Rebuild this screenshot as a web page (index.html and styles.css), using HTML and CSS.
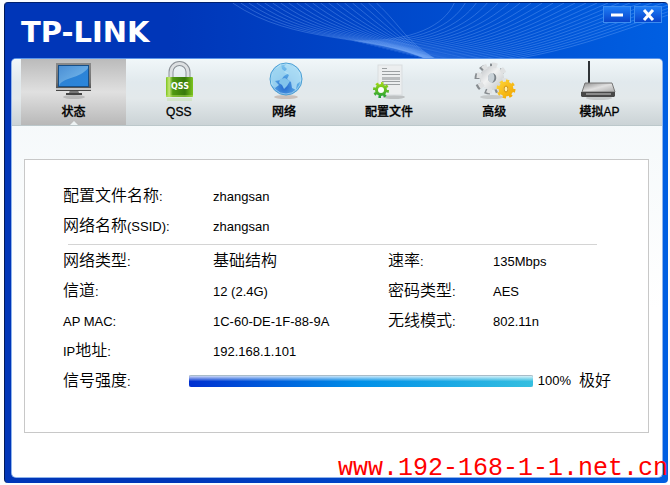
FILE: index.html
```
<!DOCTYPE html>
<html lang="zh-Hans">
<head>
  <meta charset="UTF-8">
  <title>TP-LINK</title>
  <link rel="stylesheet" href="styles.css">
</head>
<body>
<div class="window">
  <header class="titlebar">
    <svg class="waves" id="waves" viewBox="0 0 664 57" preserveAspectRatio="xMaxYMin slice" aria-hidden="true"></svg>
    <div class="logo">TP-LINK</div>
    <div class="window-buttons">
      <button type="button" aria-label="最小化"><svg width="26" height="16"><path d="M7 8h12" stroke="#fff" stroke-width="3"/></svg></button>
      <button type="button" aria-label="关闭"><svg width="26" height="16"><path d="M9 3l9 10M18 3l-9 10" stroke="#fff" stroke-width="3"/></svg></button>
    </div>
  </header>

  <main class="content">
    <nav class="tabs">
      <!-- 状态 -->
      <button type="button" class="tab active">
        <svg width="60" height="42" viewBox="0 0 60 42">
          <defs>
            <linearGradient id="screen" x1="0" y1="0" x2="1" y2="1"><stop offset="0" stop-color="#2f80d0"/><stop offset="1" stop-color="#2a86dc"/></linearGradient>
            <linearGradient id="shine" x1="0" y1="0" x2="1" y2="1"><stop offset="0" stop-color="#4b8fd4"/><stop offset="1" stop-color="#7cc0f0"/></linearGradient>
            <linearGradient id="metal" x1="0" y1="0" x2="0" y2="1"><stop offset="0" stop-color="#8a8a8a"/><stop offset=".7" stop-color="#707070"/><stop offset="1" stop-color="#444"/></linearGradient>
          </defs>
          <ellipse cx="30" cy="37" rx="11" ry="2" fill="#888" opacity=".4"/>
          <path d="M26 30h8l1 3h-10z" fill="#777"/>
          <rect x="22" y="33" width="16" height="2" fill="#444"/>
          <rect x="12" y="3" width="35" height="28" fill="url(#metal)"/>
          <rect x="12" y="28" width="35" height="2" fill="#c4c4c4"/>
          <rect x="14" y="5" width="31" height="22" fill="#174f87"/>
          <rect x="15" y="6" width="29" height="20" fill="url(#shine)"/>
          <path d="M15 26C18 17 36 19 44 8V26z" fill="url(#screen)"/>
        </svg>
        <span>状态</span>
      </button>
      <!-- QSS -->
      <button type="button" class="tab">
        <svg width="60" height="42" viewBox="0 0 60 42">
          <defs>
            <linearGradient id="green" x1="0" y1="0" x2="1" y2="0"><stop offset="0" stop-color="#7cc41f"/><stop offset=".12" stop-color="#c6e878"/><stop offset=".25" stop-color="#4f9a10"/><stop offset=".7" stop-color="#37790a"/><stop offset="1" stop-color="#7cc41f"/></linearGradient>
          </defs>
          <path d="M22 18V12a8 8 0 0 1 17 0v6" fill="none" stroke="#8b9197" stroke-width="5"/>
          <path d="M22 18V12a8 8 0 0 1 17 0v6" fill="none" stroke="#dde0e2" stroke-width="3"/>
          <rect x="17" y="17" width="27" height="20" rx="1" fill="url(#green)"/>
          <path d="M17 36h27" stroke="#b2e05a"/>
          <text x="31" y="29" class="lock-text">QSS</text>
          <rect x="18" y="38" width="25" height="3" fill="#b5dc8d" opacity=".35"/>
        </svg>
        <span>QSS</span>
      </button>
      <!-- 网络 -->
      <button type="button" class="tab">
        <svg width="60" height="42" viewBox="0 0 60 42">
          <defs>
            <radialGradient id="globe" cx=".45" cy=".75" r=".8"><stop offset="0" stop-color="#2468cf"/><stop offset=".5" stop-color="#58a8e4"/><stop offset="1" stop-color="#8accf0"/></radialGradient>
          </defs>
          <ellipse cx="32" cy="37" rx="12" ry="2" fill="#a98f80" opacity=".45"/>
          <circle cx="32" cy="19" r="16" fill="url(#globe)" stroke="#4a9fd4"/>
          <path d="M18 14l5-7 4-3 1 5 4 3 3 1-5 3-3 4-6 1 4 4-4 3-4-4z" fill="#a9dcf3" opacity=".8"/>
          <path d="M33 4l8 3 5 6 1 8-4 3-1 6-4-2-1-6-4-3 2-4-5-3 3-3-3-3z" fill="#bce6f7" opacity=".75"/>
          <path d="M26 19l5-1 5 3-3 5-3 3-2-4-3-2z" fill="#82c3eb"/>
          <circle cx="32" cy="19" r="15" fill="none" stroke="#d8f2fc" opacity=".5"/>
        </svg>
        <span>网络</span>
      </button>
      <!-- 配置文件 -->
      <button type="button" class="tab">
        <svg width="60" height="42" viewBox="0 0 60 42">
          <defs>
            <linearGradient id="lime" gradientUnits="userSpaceOnUse" x1="0" y1="22" x2="0" y2="39"><stop offset="0" stop-color="#a6dc14"/><stop offset="1" stop-color="#159a3a"/></linearGradient>
          </defs>
          <ellipse cx="35" cy="37" rx="11" ry="2" fill="#999" opacity=".5"/>
          <rect x="19" y="5" width="24" height="30" fill="#eceeef" stroke="#d9dddf"/>
          <path d="M23 9h5M23 12h18M23 15h18M23 22h18M23 25h18" transform="translate(0 -.5)" stroke="#9b9fa1"/>
          <rect x="23" y="17" width="18" height="3" fill="#b9bcbe"/>
          <circle cx="22" cy="30" r="4" fill="none" stroke="url(#lime)" stroke-width="4"/>
          <circle cx="22" cy="30" r="6.500" fill="none" stroke="url(#lime)" stroke-width="3" pathLength="16" stroke-dasharray="1 1"/>
          <circle cx="22" cy="30" r="3" fill="#fff"/>
        </svg>
        <span>配置文件</span>
      </button>
      <!-- 高级 -->
      <button type="button" class="tab">
        <svg width="60" height="42" viewBox="0 0 60 42">
          <defs>
            <linearGradient id="silver" x1="0" y1="0" x2="1" y2="1"><stop offset="0" stop-color="#cfd2d4"/><stop offset=".4" stop-color="#f1f2f2"/><stop offset="1" stop-color="#cdd0d2"/></linearGradient>
            <linearGradient id="gold" gradientUnits="userSpaceOnUse" x1="33" y1="20" x2="50" y2="38"><stop offset="0" stop-color="#ffd83a"/><stop offset="1" stop-color="#f0a400"/></linearGradient>
          </defs>
          <ellipse cx="28" cy="37" rx="12" ry="2" fill="#999" opacity=".4"/>
          <circle cx="26" cy="19" r="13" fill="none" stroke="#878c90" stroke-width="5" pathLength="16" stroke-dasharray="1 1"/>
          <circle cx="27" cy="18" r="11" fill="#9da2a5"/>
          <circle cx="28" cy="18" r="8" fill="none" stroke="url(#silver)" stroke-width="8"/>
          <circle cx="28" cy="18" r="13" fill="none" stroke="#dfe1e2" stroke-width="5" pathLength="16" stroke-dasharray="1 1"/>
          <ellipse cx="28" cy="18" rx="4" ry="5" fill="#c9d2d8"/>
          <path d="M29 13c5 2 4 9-1 10 3-3 3-7 1-10z" fill="#7a8288"/>
          <circle cx="42" cy="29" r="5" fill="none" stroke="url(#gold)" stroke-width="5"/>
          <circle cx="42" cy="29" r="8" fill="none" stroke="url(#gold)" stroke-width="3" pathLength="16" stroke-dasharray="1 1"/>
          <ellipse cx="42" cy="29" rx="2" ry="3" fill="#fff0a8" stroke="#d18c00"/>
        </svg>
        <span>高级</span>
      </button>
      <!-- 模拟AP -->
      <button type="button" class="tab">
        <svg width="60" height="42" viewBox="0 0 60 42">
          <defs>
            <linearGradient id="router" x1="0" y1="0" x2="1" y2="1"><stop offset="0" stop-color="#8c8c8c"/><stop offset=".5" stop-color="#e0e0e0"/><stop offset="1" stop-color="#aaa"/></linearGradient>
          </defs>
          <ellipse cx="30" cy="38" rx="13" ry="2" fill="#999" opacity=".4"/>
          <path d="M19 1h2v22h-2z" fill="#2f3336"/>
          <path d="M16 23h27l3 9H13z" fill="url(#router)" stroke="#777"/>
          <path d="M12 32h34v4l-1 1H13l-1-1z" fill="#484848"/>
          <path d="M17 34h25" stroke="#8b8b8b" stroke-width="2"/>
        </svg>
        <span>模拟AP</span>
      </button>
    </nav>

    <section class="panel">
      <dl class="info">
        <dt>配置文件名称<small>:</small></dt><dd class="wide"><small>zhangsan</small></dd>
        <dt>网络名称<small>(SSID):</small></dt><dd class="wide"><small>zhangsan</small></dd>
      </dl>
      <hr>
      <dl class="info">
        <dt>网络类型<small>:</small></dt><dd>基础结构</dd>
        <dt>速率<small>:</small></dt><dd><small>135Mbps</small></dd>
        <dt>信道<small>:</small></dt><dd><small>12 (2.4G)</small></dd>
        <dt>密码类型<small>:</small></dt><dd><small>AES</small></dd>
        <dt><small>AP MAC:</small></dt><dd><small>1C-60-DE-1F-88-9A</small></dd>
        <dt>无线模式<small>:</small></dt><dd><small>802.11n</small></dd>
        <dt><small>IP</small>地址<small>:</small></dt><dd class="wide"><small>192.168.1.101</small></dd>
      </dl>
      <div class="signal">
        <label for="signal">信号强度<small>:</small></label>
        <progress id="signal" value="100" max="100"></progress>
        <small>100%</small>
        <span class="level">极好</span>
      </div>
    </section>
  </main>
  <div class="watermark">www.192-168-1-1.net.cn</div>
</div>

<script>
  // 标题栏的波浪线
  let d = '';
  for (let i = 0; i < 19; i++) {
    d += `M${228 + 8 * i} 0C${290 + 6 * i} ${42 - i} ${365 + 2 * i} ${30 + i / 2} ${424 + i / 2} 57`;
  }
  for (let i = 0; i < 24; i++) {
    d += `M${350 + 4 * i} ${38 + i}C${410 + 6 * i} ${39 + i} ${440 + 8 * i} 22 ${450 + 11 * i} 0`;
  }
  document.getElementById('waves').innerHTML = `<path d="${d}"/>`;
</script>
</body>
</html>
```

FILE: styles.css
```
* { box-sizing: border-box; }

body {
  margin: 0;
  padding: 2px 2px 2px 4px;
  min-height: 100vh;
  display: flex;
  background: #fafdff;
  color: #000;
  font-family: "Liberation Sans", Arial, "Noto Sans CJK SC", sans-serif;
}

button {
  border: 0;
  padding: 0;
  font: inherit;
  color: inherit;
}

.window {
  position: relative;
  flex: 1;
  display: flex;
  flex-direction: column;
  padding: 0 5px 5px 6px;
  background: linear-gradient(90deg, #0036b8 25%, #005fe2);
  border-top: 1px solid #00206e;
  border-left: 1px solid #001a5a;
  border-radius: 4px;
}

/* title bar */
.titlebar {
  height: 55px;
  display: flex;
  justify-content: space-between;
  align-items: flex-start;
  padding: 3px 1px 0 10px;
}

.waves {
  position: absolute;
  top: 0;
  left: 0;
  width: 100%;
  height: 55px;
}

.waves path {
  fill: none;
  stroke: #8dbcff;
  opacity: 0.3;
}

.logo {
  padding-top: 8px;
  color: #fff;
  font: bold 29px/36px "DejaVu Sans", sans-serif;
}

.window-buttons {
  position: relative;
  display: flex;
  gap: 3px;
}

.window-buttons button {
  width: 28px;
  height: 17px;
  background: linear-gradient(#1e7cf5, #0744cc);
  border: 1px solid #3c8cf0;
  line-height: 0;
}

/* white content area */
.content {
  flex: 1;
  display: flex;
  flex-direction: column;
  background: linear-gradient(#f2f7f9, #fff 60%);
  border: 1px solid #8fb4ec;
  border-top-color: #5b95ea;
  border-radius: 5px;
  overflow: hidden;
}

.tabs {
  display: flex;
  padding: 0 10px 0 9px;
  background: linear-gradient(#f1f7f9, #e1e9ed 35%, #e3e9eb 60%, #cbd3d6);
  border-bottom: 1px solid #bcc8cb;
}

.tab {
  position: relative;
  flex: 1;
  height: 66px;
  display: flex;
  flex-direction: column;
  align-items: center;
  padding-top: 1px;
  background: none;
  font-size: 12px;
  font-weight: 500;
  line-height: 20px;
  -webkit-text-stroke: 0.3px #000;
}

.tab.active {
  background: linear-gradient(#bbb, #e0e0e0 50%, #b8b8b8);
}

.tab.active::after {
  content: "";
  position: absolute;
  bottom: 0;
  border: 4px solid transparent;
  border-top: 0;
  border-bottom-color: #edf3f4;
}

.lock-text {
  font: bold 8px "DejaVu Sans", sans-serif;
  fill: #fff;
  text-anchor: middle;
  -webkit-text-stroke: 0;
}

/* status panel */
.panel {
  flex: 1;
  margin: 33px 13px 44px 12px;
  padding: 21px 37px 0 38px;
  background: #fff;
  border: 1px solid #c8c8c8;
  font-size: 16px;
  font-weight: 350;
  line-height: 30px;
}

.panel small {
  font-size: 13px;
}

.info {
  display: grid;
  grid-template-columns: 150px 175px 105px 1fr;
  grid-auto-rows: 30px;
  margin: 0;
}

.info dd {
  margin: 0;
}

.info .wide {
  grid-column: span 3;
}

.panel hr {
  margin: 3px 14px 1px 5px;
  border: 0;
  border-top: 1px solid #d4d4d4;
}

.signal {
  display: flex;
  align-items: center;
  height: 30px;
}

.signal label {
  width: 126px;
}

.signal progress {
  flex: 1;
  height: 12px;
  margin-right: 5px;
  appearance: none;
  border: 0;
}

.signal progress::-webkit-progress-bar {
  background: #e4e4e4;
}

.signal progress::-webkit-progress-value {
  background: linear-gradient(rgba(255, 255, 255, 0.8), transparent 50%), linear-gradient(90deg, #0030d0, #0090e8 50%, #35bfe0);
  border-top: 1px solid #a9bcc8;
  border-radius: 2px;
}

.signal .level {
  margin-left: 8px;
}

.watermark {
  position: absolute;
  right: 0;
  bottom: 0;
  color: #f00;
  font: 25px/28px "Liberation Mono", monospace;
}
```
